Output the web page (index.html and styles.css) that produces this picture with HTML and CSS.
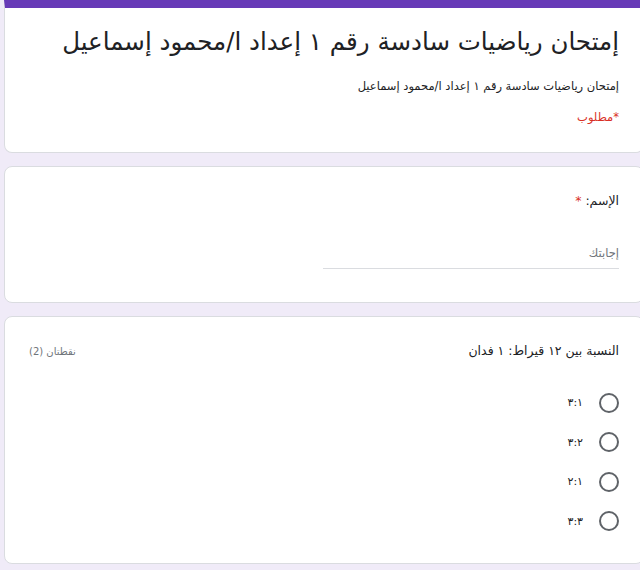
FILE: index.html
```html
<!DOCTYPE html>
<html lang="ar">
<head>
<meta charset="utf-8">
<title>إمتحان رياضيات سادسة رقم ١</title>
<link rel="stylesheet" href="styles.css">
</head>
<body>
<main class="form">
  <section class="card card-head" dir="rtl">
    <h1 class="form-title">إمتحان رياضيات سادسة رقم ١ إعداد ا/محمود إسماعيل</h1>
    <p class="form-desc">إمتحان رياضيات سادسة رقم ١ إعداد ا/محمود إسماعيل</p>
    <p class="form-required">*مطلوب</p>
  </section>

  <section class="card card-q" dir="rtl">
    <div class="q-title">الإسم: <span class="star">*</span></div>
    <div class="text-input">
      <span class="placeholder">إجابتك</span>
    </div>
  </section>

  <section class="card card-q card-choice" dir="rtl">
    <div class="q-header">
      <div class="q-title">النسبة بين ١٢ قيراط: ١ فدان</div>
      <div class="q-points">نقطتان (2)</div>
    </div>
    <div class="options">
      <label class="option"><span class="radio"></span><span class="opt-text">٣:١</span></label>
      <label class="option"><span class="radio"></span><span class="opt-text">٣:٢</span></label>
      <label class="option"><span class="radio"></span><span class="opt-text">٢:١</span></label>
      <label class="option"><span class="radio"></span><span class="opt-text">٣:٣</span></label>
    </div>
  </section>
</main>
</body>
</html>
```

FILE: styles.css
```css
html, body {
  margin: 0;
  overflow: hidden;
}

body {
  background: #f0ebf8;
  font-family: "DejaVu Sans", "Liberation Sans", sans-serif;
  color: #202124;
}

.form {
  display: flex;
  flex-direction: column;
  align-items: flex-start;
  gap: 13px;
  padding-left: 4px;
}

.card {
  width: 640px;
  flex: none;
  box-sizing: border-box;
  background: #fff;
  border: 1px solid #dadce0;
  border-radius: 8px;
  padding: 0 24px;
}

.card-head {
  border-top: 8px solid #673ab7;
  border-radius: 0 0 8px 8px;
  padding-top: 14px;
  padding-bottom: 25px;
}

.form-title {
  margin: 0;
  font-size: 24.5px;
  line-height: 40px;
  font-weight: 400;
  color: #202124;
  white-space: nowrap;
}

.form-desc {
  margin: 14px 0 0;
  font-size: 11.5px;
  line-height: 20px;
}

.form-required {
  margin: 11px 0 0;
  font-size: 11.5px;
  line-height: 20px;
  color: #d93025;
}

.card-q {
  padding-top: 22px;
  padding-bottom: 33px;
}

.q-title {
  font-size: 12.5px;
  line-height: 24px;
  color: #202124;
}

.star {
  color: #d93025;
}

.text-input {
  width: 296px;
  margin-top: 24px;
  height: 32px;
  box-sizing: border-box;
  border-bottom: 1px solid #dadce0;
  display: flex;
  align-items: center;
}

.placeholder {
  font-size: 11.5px;
  color: #70757a;
}

.card-choice {
  padding-bottom: 22px;
}

.q-header {
  display: flex;
  justify-content: space-between;
  align-items: center;
}

.q-points {
  font-size: 10px;
  color: #70757a;
}

.options {
  margin-top: 20px;
  display: flex;
  flex-direction: column;
}

.option {
  display: flex;
  align-items: center;
  gap: 16px;
  height: 39.5px;
}

.radio {
  width: 20px;
  height: 20px;
  box-sizing: border-box;
  border: 2px solid #5f6368;
  border-radius: 50%;
  flex: none;
}

.opt-text {
  font-size: 11px;
  color: #202124;
}
```
